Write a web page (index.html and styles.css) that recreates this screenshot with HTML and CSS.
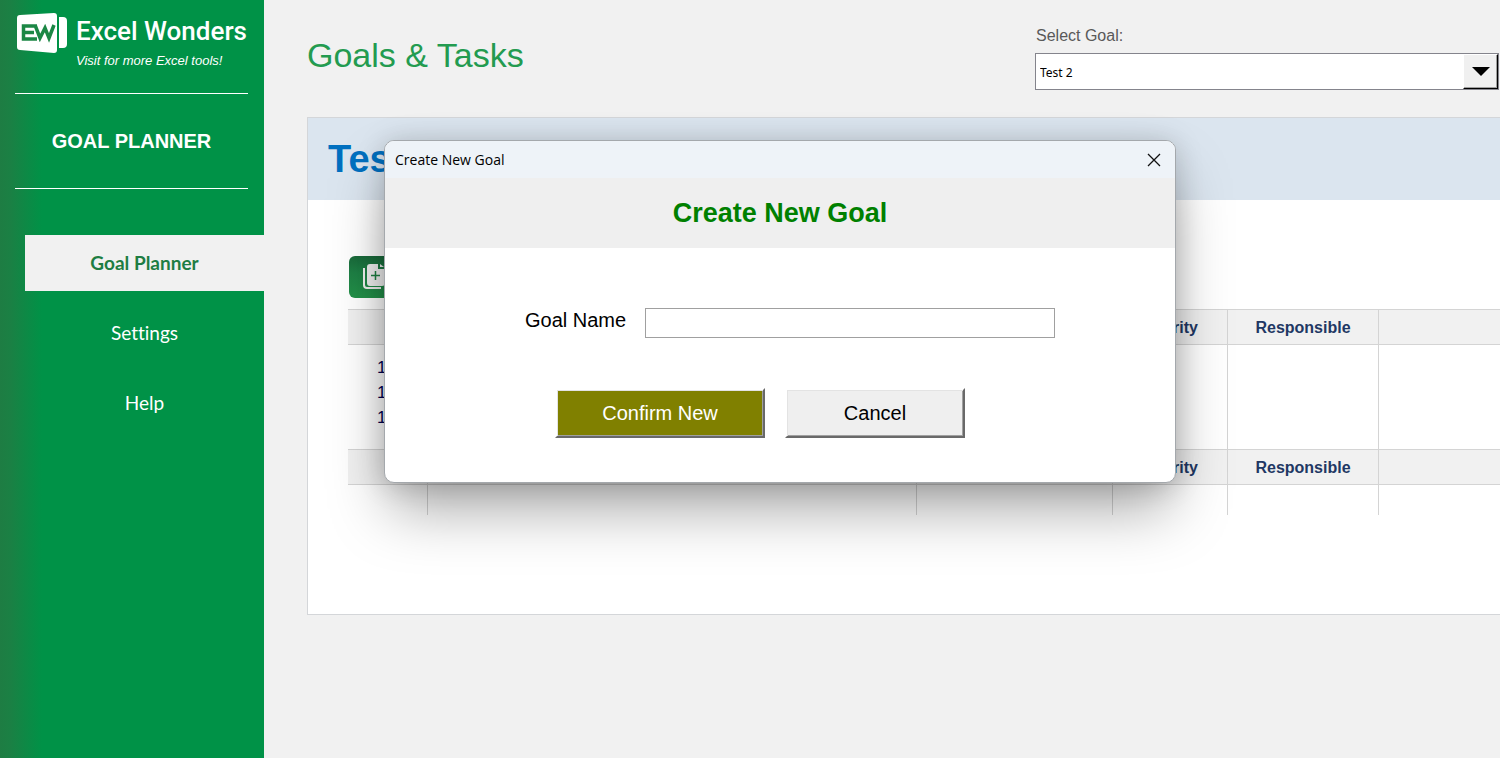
FILE: index.html
```html
<!DOCTYPE html>
<html lang="en">
<head>
<meta charset="utf-8">
<title>Goal Planner</title>
<link rel="stylesheet" href="styles.css">
</head>
<body>
<div class="app">
  <aside class="sidebar">
    <a class="brand" href="#">
      <svg class="brand-logo" viewBox="0 0 50 40" aria-hidden="true">
        <path d="M3 2 37 0q3 0 3 3v34q0 3-3 3L3 37q-3 0-3-3V5q0-3 3-3z" fill="#fff"/>
        <path d="M42 4h4q4 0 4 4v23q0 4-4 4h-4z" fill="#fff"/>
        <path d="M20 13H6.500V26H20M7 19.500H17M18 12l5 13 5-10 4 10L37 12" fill="none" stroke="#1c8745" stroke-width="3.500"/>
      </svg>
      <span class="brand-text">
        <span class="brand-name">Excel Wonders</span>
        <span class="brand-tag">Visit for more Excel tools!</span>
      </span>
    </a>
    <h2 class="product">GOAL PLANNER</h2>
    <nav class="nav">
      <a class="nav-item active" href="#">Goal Planner</a>
      <a class="nav-item" href="#">Settings</a>
      <a class="nav-item" href="#">Help</a>
    </nav>
  </aside>

  <main class="main">
    <header class="topbar">
      <h1 class="title">Goals &amp; Tasks</h1>
      <div class="picker">
        <label class="picker-label" for="goal">Select Goal:</label>
        <div class="picker-box">
          <select class="picker-select" id="goal"><option>Test 2</option></select>
          <span class="picker-arrow"></span>
        </div>
      </div>
    </header>

    <section class="card">
      <h2 class="card-title">Test 2</h2>
      <div class="card-body">
        <button class="add" type="button" aria-label="Add">
          <svg class="add-icon" viewBox="0 0 24 26" aria-hidden="true">
            <path d="M1 4v17q0 3 3 3h14" fill="none" stroke="#f1f1f1" stroke-width="2"/>
            <path d="M7 0h8v5h7v14q0 3-3 3H7q-3 0-3-3V3q0-3 3-3z" fill="#f1f1f1"/>
            <path d="M17 0v3h4z" fill="#f1f1f1"/>
            <path d="M12.500 7v9M8 11.500h9" stroke="#1d8042" stroke-width="1.500"/>
          </svg>
        </button>
        <table class="tasks">
          <colgroup><col class="c-num"><col class="c-task"><col class="c-date"><col class="c-prio"><col class="c-resp"><col></colgroup>
          <thead><tr><th></th><th></th><th></th><th>Priority</th><th>Responsible</th><th></th></tr></thead>
          <tbody class="rows">
            <tr><td>1</td><td></td><td></td><td></td><td></td><td></td></tr>
            <tr><td>1</td><td></td><td></td><td></td><td></td><td></td></tr>
            <tr><td>1</td><td></td><td></td><td></td><td></td><td></td></tr>
          </tbody>
        </table>
        <table class="tasks">
          <colgroup><col class="c-num"><col class="c-task"><col class="c-date"><col class="c-prio"><col class="c-resp"><col></colgroup>
          <thead><tr><th></th><th></th><th></th><th>Priority</th><th>Responsible</th><th></th></tr></thead>
          <tbody class="blank">
            <tr><td></td><td></td><td></td><td></td><td></td><td></td></tr>
          </tbody>
        </table>
      </div>
    </section>
  </main>

  <div class="dialog" role="dialog" aria-labelledby="dialog-title">
    <div class="dialog-bar">
      <span>Create New Goal</span>
      <button class="close" type="button" aria-label="Close">
        <svg class="close-icon" viewBox="0 0 14 14" aria-hidden="true"><path d="M1 1l12 12M13 1L1 13" stroke="#111" stroke-width="1.300"/></svg>
      </button>
    </div>
    <h2 class="dialog-title" id="dialog-title">Create New Goal</h2>
    <form class="form">
      <div class="field">
        <label for="name">Goal Name</label>
        <input class="field-input" id="name" type="text">
      </div>
      <div class="actions">
        <button class="btn confirm" type="button">Confirm New</button>
        <button class="btn cancel" type="button">Cancel</button>
      </div>
    </form>
  </div>
</div>
</body>
</html>
```
FILE: styles.css
```css
* { box-sizing: border-box; }
body {
  margin: 0;
  font-family: "Liberation Sans", Arial, sans-serif;
  background: #f1f1f1;
}
h1, h2 { margin: 0; }
.app {
  position: relative;
  display: flex;
  min-height: 100vh;
  overflow: hidden;
}

/* Sidebar */
.sidebar {
  flex: 0 0 264px;
  min-width: 0;
  background: linear-gradient(90deg, #1e7d43 0, #1b8044 10px, #009247 42px);
  color: #fff;
}
.brand {
  display: flex;
  gap: 9px;
  height: 94px;
  margin: 0 16px 0 15px;
  padding: 13px 0 0 2px;
  border-bottom: 1px solid #fff;
  color: #fff;
  text-decoration: none;
}
.brand-logo { width: 50px; height: 40px; flex: none; }
.brand-text { display: flex; flex-direction: column; white-space: nowrap; }
.brand-name { font: 500 26px/37px Roboto, sans-serif; }
.brand-tag { font-size: 13px; font-style: italic; line-height: 22px; }
.product {
  margin: 0 16px 0 15px;
  border-bottom: 1px solid #fff;
  font-size: 20px;
  line-height: 94px;
  text-align: center;
}
.nav {
  display: flex;
  flex-direction: column;
  gap: 14px;
  padding: 46px 0 0 25px;
}
.nav-item {
  color: #fff;
  font: 400 19px/56px Lato, sans-serif;
  font-variant-ligatures: none;
  text-align: center;
  text-decoration: none;
}
.active { background: #f1f1f1; color: #1e7d43; font-weight: 700; }

/* Content */
.main { flex: 1; min-width: 0; padding-left: 43px; }
.topbar { display: flex; justify-content: space-between; height: 117px; }
.title { padding-top: 35px; color: #239b50; font-size: 34px; font-weight: 400; line-height: 40px; }
.picker { width: 465px; padding-top: 26px; }
.picker-label { display: block; padding-left: 1px; color: #595959; font-size: 16px; line-height: 20px; }
.picker-box {
  display: flex;
  height: 37px;
  margin: 7px 1px 0 0;
  border: 1px solid #84848c;
  background: #fff;
}
.picker-select {
  flex: 1;
  padding: 2px 4px 0;
  border: 0;
  background: none;
  appearance: none;
  color: #000;
  font: 12px "Noto Sans", sans-serif;
}
.picker-arrow {
  display: flex;
  align-items: center;
  justify-content: center;
  width: 35px;
  border: 1px solid #fff;
  border-right-color: #000;
  border-bottom-color: #000;
  background: #f0f0f0;
  box-shadow: inset -1px -1px #a0a0a0;
}
.picker-arrow::after {
  content: "";
  border: 9px solid transparent;
  border-top-color: #000;
  border-bottom: 0;
}
.card { border: 1px solid #d4d6d9; border-right: 0; background: #fff; }
.card-title { padding-left: 20px; background: #dbe5ef; color: #0070c0; font-size: 38px; line-height: 82px; }
.card-body { padding: 56px 0 99px 40px; }
.add {
  display: flex;
  align-items: center;
  width: 140px;
  height: 42px;
  margin: 0 0 11px 1px;
  padding: 0 14px;
  border: 0;
  border-radius: 6px;
  background: linear-gradient(#19693a, #1e8045 40%, #229148);
}
.add-icon { width: 24px; height: 26px; }
.tasks { width: 100%; border-collapse: separate; border-spacing: 0; table-layout: fixed; }
.c-num { width: 80px; }
.c-task { width: 489px; }
.c-date { width: 196px; }
.c-prio { width: 115px; }
.c-resp { width: 151px; }
.tasks th, .tasks td { padding: 0; border-right: 1px solid #d4d4d4; }
.tasks th:last-child, .tasks td:last-child { border-right: 0; }
.tasks th {
  height: 36px;
  padding-top: 2px;
  border-top: 1px solid #d4d4d4;
  border-bottom: 1px solid #d4d4d4;
  background: #f1f1f1;
  color: #1f3864;
  font-size: 16px;
}
.tasks td { height: 25px; color: #000050; font-size: 17px; line-height: 25px; }
.tasks td:first-child { padding-left: 29px; }
.rows tr:first-child td { height: 35px; padding-top: 10px; }
.rows tr:last-child td { height: 44px; padding-bottom: 19px; }
.blank td { height: 30px; }

/* Dialog floating over the sheet */
.dialog {
  position: absolute;
  top: 140px;
  left: 384px;
  width: 792px;
  border: 1px solid #a4a8ac;
  border-radius: 10px;
  overflow: hidden;
  background: #fff;
  box-shadow: 0 32px 60px -6px rgba(0, 0, 0, .34), 0 2px 28px rgba(0, 0, 0, .18);
}
.dialog-bar {
  display: flex;
  align-items: center;
  justify-content: space-between;
  height: 37px;
  padding: 0 14px 0 10px;
  background: #eef3f8;
  color: #000;
  font: 14px "Open Sans", sans-serif;
}
.close { display: flex; padding: 0; border: 0; background: none; }
.close-icon { width: 14px; height: 14px; }
.dialog-title {
  background: #efefef;
  color: #008000;
  font-size: 27px;
  line-height: 70px;
  text-align: center;
}
.form { padding: 60px 120px 44px 140px; font-size: 20px; color: #000; }
.field { display: flex; }
.field label { flex: 0 0 120px; line-height: 24px; white-space: nowrap; }
.field-input { flex: 1; min-width: 0; height: 30px; border: 1px solid #a0a0a0; background: #fff; font: inherit; }
.actions { display: flex; gap: 20px; padding: 50px 0 0 30px; }
.btn {
  height: 50px;
  padding: 0;
  border: 2px solid #fff;
  border-right-color: #696969;
  border-bottom-color: #696969;
  font: inherit;
  box-shadow: inset 1px 1px #e3e3e3, inset -1px -1px #a0a0a0;
}
.confirm { width: 210px; background: #808000; color: #fff; }
.cancel { width: 180px; background: #efefef; color: #000; }
```
